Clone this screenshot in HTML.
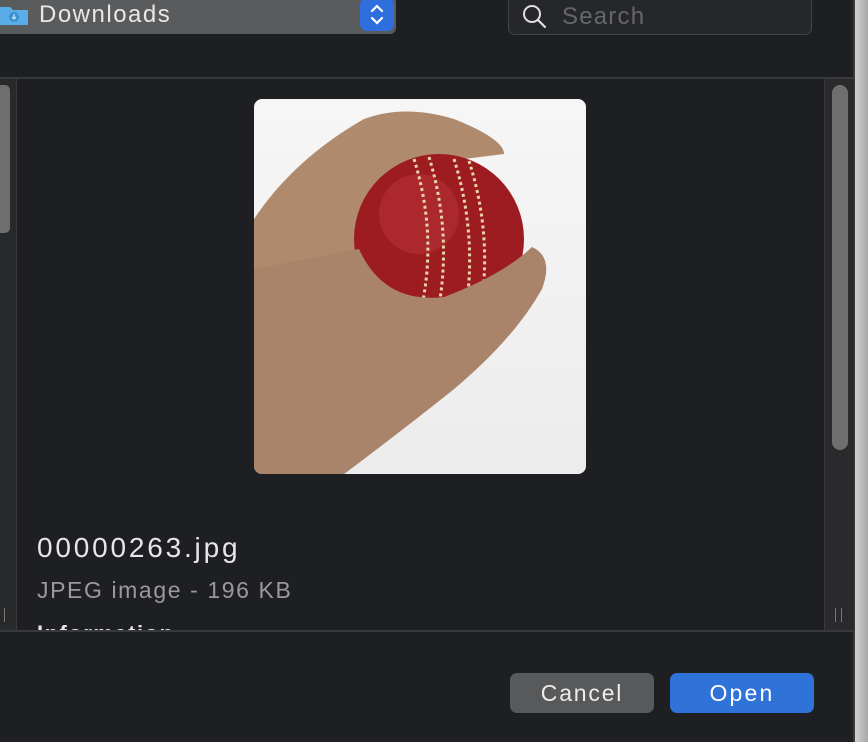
<!DOCTYPE html>
<html><head><style>
body{margin:0;width:868px;height:742px;background:#1e1f22;position:relative;overflow:hidden;font-family:"Liberation Sans",sans-serif}
.a{position:absolute}
</style></head><body>
<div class="a" style="left:855px;top:0;width:13px;height:742px;background:linear-gradient(90deg,#d0d0d0,#a8a8a8)"></div>
<div class="a" style="left:853px;top:0;width:2px;height:742px;background:#3a3a3c"></div>
<!-- popup -->
<div class="a" style="left:-6px;top:-6px;width:402px;height:40px;background:#5a5b5d;border-radius:6px"></div>
<svg class="a" style="left:0;top:3px" width="30" height="24"><path d="M0 4h10l3 3h15v15H0z" fill="#5aaee8"/><circle cx="14" cy="14" r="5" fill="#3a8fd0"/><path d="M14 11v5M12 14l2 2 2-2" stroke="#bfe0f8" stroke-width="1.3" fill="none"/></svg>
<div class="a" style="left:39px;top:1px;font-size:24px;color:#e8e8e8;line-height:28px;letter-spacing:1.5px">Downloads</div>
<div class="a" style="left:360px;top:-2px;width:34px;height:33px;background:#2f6fdd;border-radius:7px"></div>
<svg class="a" style="left:368px;top:2px" width="18" height="26"><path d="M4 9l5-5 5 5M4 16l5 5 5-5" stroke="#fff" stroke-width="2.2" fill="none" stroke-linecap="round"/></svg>
<!-- search -->
<div class="a" style="left:508px;top:-8px;width:302px;height:41px;border:1px solid #444548;border-radius:7px;background:#26272a"></div>
<svg class="a" style="left:520px;top:2px" width="30" height="28"><circle cx="12" cy="12" r="8" stroke="#e0e0e0" stroke-width="2" fill="none"/><path d="M18 18l7 7" stroke="#e0e0e0" stroke-width="2.2" stroke-linecap="round"/></svg>
<div class="a" style="left:562px;top:3px;font-size:24px;color:#66676a;line-height:28px;letter-spacing:1.2px">Search</div>
<!-- divider -->
<div class="a" style="left:0;top:77px;width:853px;height:2px;background:#38393c"></div>
<!-- left scroll -->
<div class="a" style="left:0;top:79px;width:16px;height:552px;background:#28292b;border-right:1px solid #3a3a3c"></div>
<div class="a" style="left:0;top:85px;width:10px;height:148px;background:#6e6e6e;border-radius:0 5px 5px 0"></div>
<!-- right scroll -->
<div class="a" style="left:824px;top:79px;width:29px;height:552px;background:#2a2a2c;border-left:1px solid #3a3a3c"></div>
<div class="a" style="left:832px;top:85px;width:16px;height:365px;background:#6e6e6e;border-radius:8px"></div>
<div class="a" style="left:835px;top:608px;width:1px;height:14px;background:#777"></div>
<div class="a" style="left:841px;top:608px;width:1px;height:14px;background:#777"></div>
<div class="a" style="left:4px;top:608px;width:1px;height:14px;background:#777"></div>
<!-- image -->
<div class="a" style="left:254px;top:99px;width:332px;height:375px;border-radius:8px;overflow:hidden;background:linear-gradient(180deg,#f6f6f6,#ececec)">
<svg width="332" height="375">
<path d="M0 120 Q40 60 110 20 Q150 5 200 20 Q250 40 250 55 L210 60 Q170 60 140 80 Q120 120 120 160 Q150 200 190 195 Q250 170 280 150 Q300 160 285 190 Q250 240 200 290 Q150 330 90 375 L0 375Z" fill="#b08a6c"/>
<circle cx="185" cy="140" r="85" fill="#9c1c22"/>
<circle cx="165" cy="115" r="40" fill="#b8343a" opacity=".5"/>
<path d="M160 60 Q185 140 165 220 M175 58 Q200 140 182 222 M200 60 Q225 140 210 222 M215 62 Q240 140 225 220" stroke="#e8d6a8" stroke-width="3" fill="none" stroke-dasharray="3 3"/>
<path d="M105 150 Q130 205 190 198 Q250 175 278 148 Q300 158 288 190 Q260 240 200 290 Q150 330 90 375 L0 375 L0 170Z" fill="#a9836a"/>
</svg></div>
<div class="a" style="left:37px;top:532px;font-size:28px;color:#e6e6e6;letter-spacing:2.8px">00000263.jpg</div>
<div class="a" style="left:37px;top:577px;font-size:23px;color:#9a9a9c;letter-spacing:1.6px">JPEG image - 196 KB</div>
<div class="a" style="left:37px;top:620px;font-size:22px;color:#e6e6e6;font-weight:bold;height:11px;overflow:hidden;line-height:28px;letter-spacing:1.5px">Information</div>
<div class="a" style="left:0;top:630px;width:853px;height:2px;background:#38393c"></div>
<!-- buttons -->
<div class="a" style="left:510px;top:673px;width:144px;height:40px;background:#58595b;border-radius:7px;color:#ececec;font-size:23px;text-align:center;line-height:40px;letter-spacing:1.8px">Cancel</div>
<div class="a" style="left:670px;top:673px;width:144px;height:40px;background:#2f72d8;border-radius:7px;color:#fff;font-size:23px;text-align:center;line-height:40px;letter-spacing:2.2px">Open</div>
</body></html>
